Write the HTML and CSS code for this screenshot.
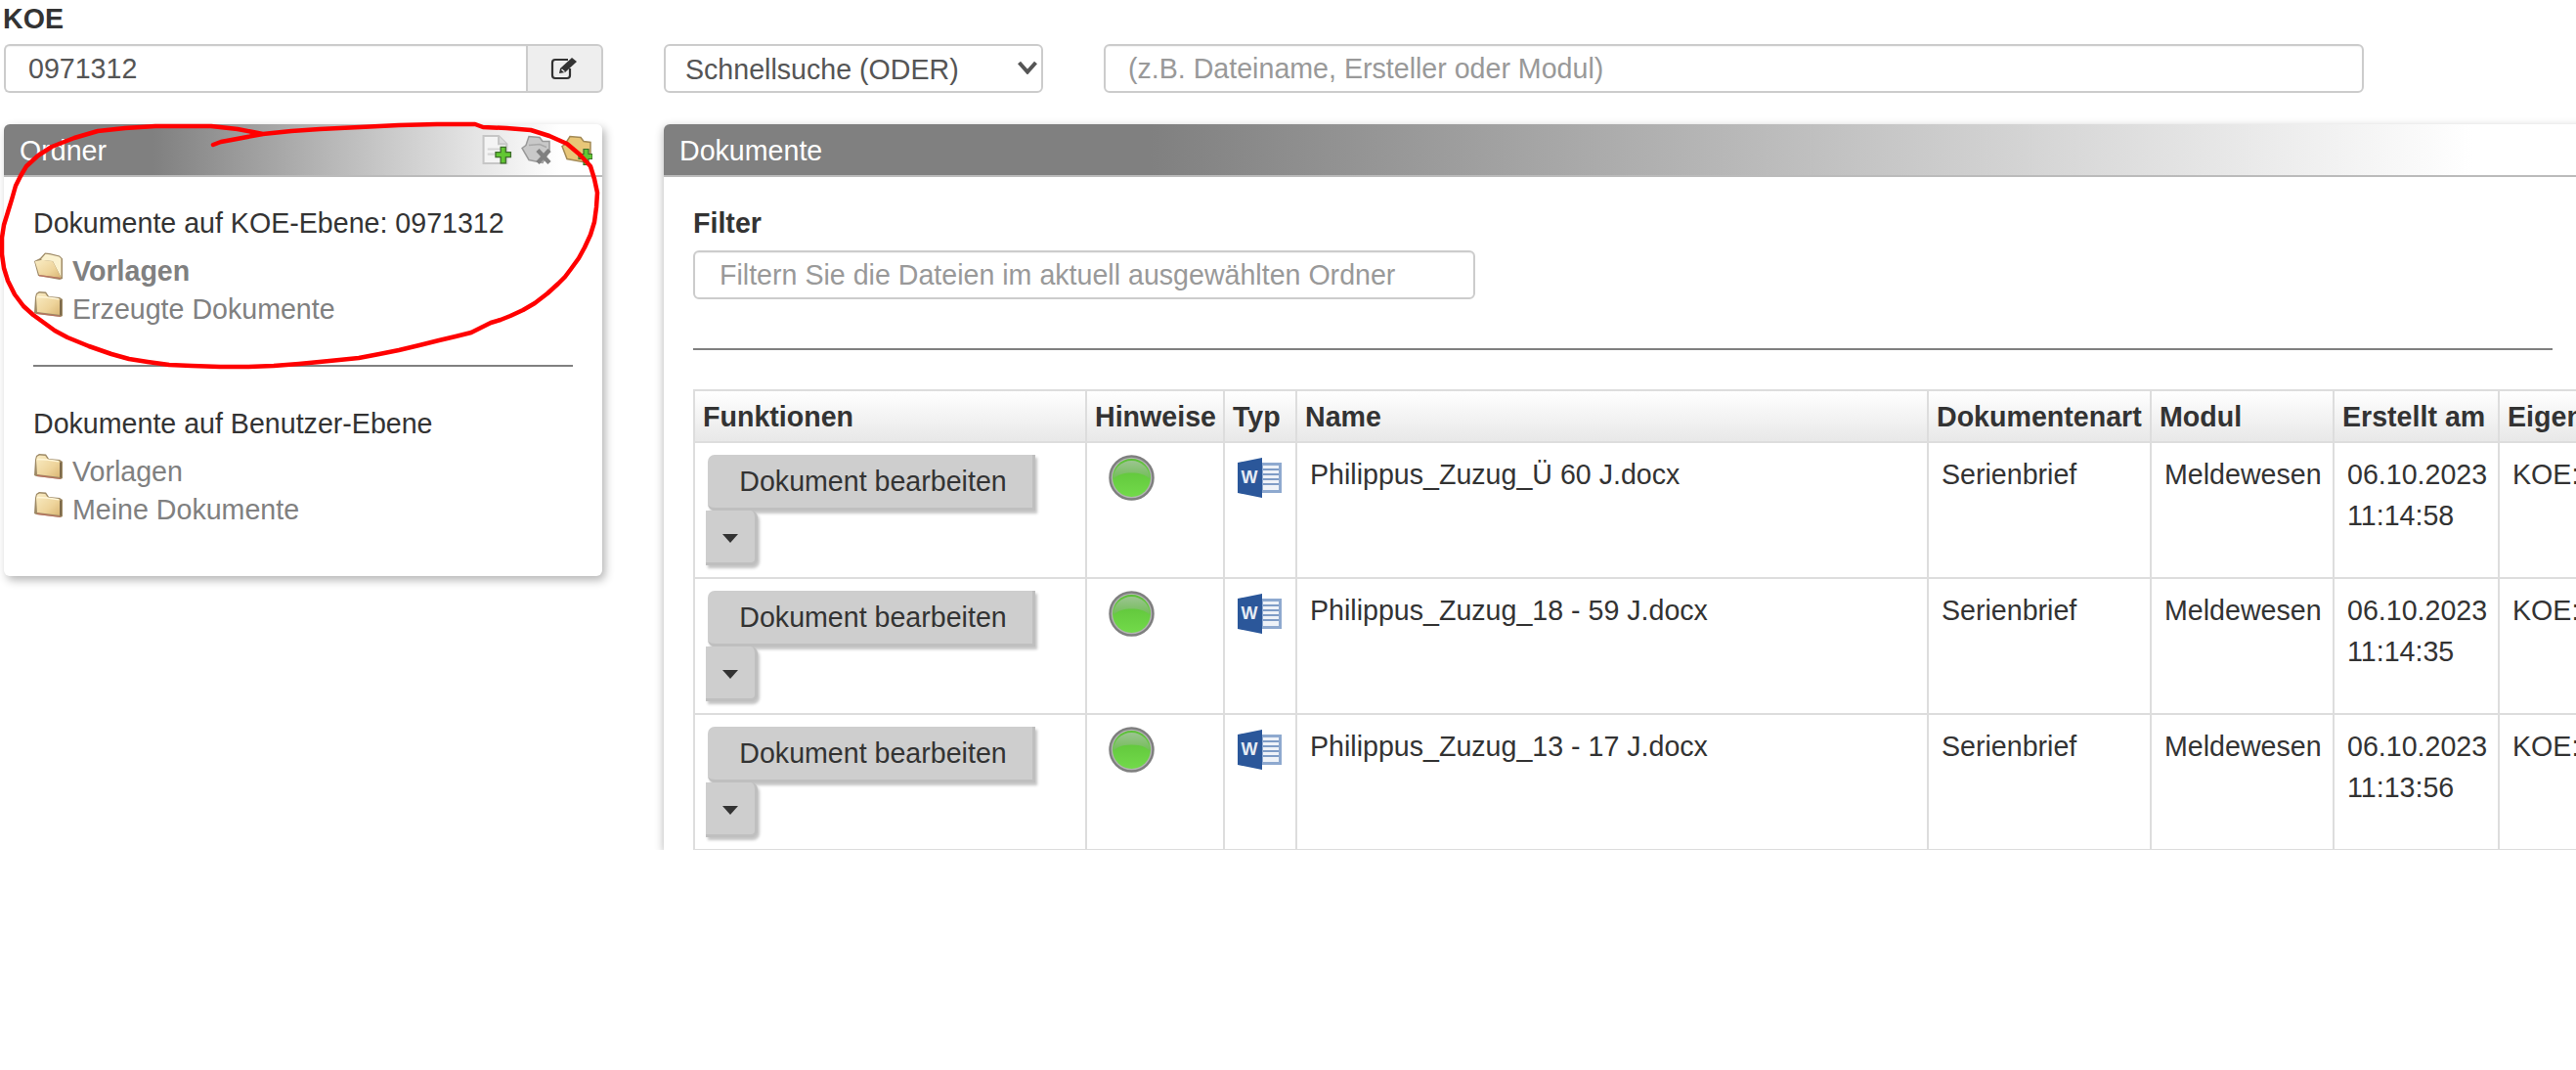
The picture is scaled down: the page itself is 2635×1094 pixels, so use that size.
FILE: index.html
```html
<!DOCTYPE html>
<html lang="de">
<head>
<meta charset="utf-8">
<title>Dokumente</title>
<link rel="stylesheet" href="styles.css">
</head>
<body>
<svg class="defs" width="0" height="0" aria-hidden="true">
  <defs>
    <linearGradient id="fold" x1="0" y1="0" x2="1" y2="1">
      <stop offset="0" stop-color="#f9ecc4"/><stop offset=".6" stop-color="#eed49b"/><stop offset="1" stop-color="#d9b573"/>
    </linearGradient>
    <linearGradient id="led" x1="0" y1="0" x2="0" y2="1">
      <stop offset="0" stop-color="#5bbf36"/><stop offset="1" stop-color="#72da4a"/>
    </linearGradient>
    <linearGradient id="ledtop" x1="0" y1="0" x2="0" y2="1">
      <stop offset="0" stop-color="#9cc491"/><stop offset="1" stop-color="#70bd55"/>
    </linearGradient>
    <symbol id="folder-closed" viewBox="0 0 31 28">
      <path d="M2 7 3 3 6 1l7 .5 3 4.500 11 1 3 2V26l-2 1L3 24l-2-1z" fill="#9e8a66"/>
      <path d="M3 7 4 3.800 6.500 2.500l5.800.4 3 4.300 11.200 1 1.500 1.500V25L4 22z" fill="url(#fold)"/>
      <path d="M4 6.500 14 7l12 1.800" fill="none" stroke="#fff6d8" stroke-width="1.500"/>
      <path d="M27 9.500h2V25.500h-2z" fill="#7d6a4a"/>
      <path d="M4 22.500 28 26v1L4 24z" fill="#c26a5c" opacity=".75"/>
    </symbol>
    <symbol id="folder-open" viewBox="0 0 31 28">
      <path d="M7 6 12 .5l5 .5 10 2.500 3 3V27l-3 1L5 24 1 9z" fill="#9e8a66"/>
      <path d="M8 7 12.500 1.800l4.500.5 9.500 2.300 2 2v19L20 9 9 8z" fill="#fbf2cf"/>
      <path d="M1.800 9.300 9 7.800 20 9.300l8.600 16.700L6 23z" fill="url(#fold)"/>
      <path d="M6 23 28 26v1L6 24.500z" fill="#c26a5c" opacity=".75"/>
    </symbol>
    <symbol id="led-green" viewBox="0 0 47 47">
      <circle cx="23.500" cy="23.500" r="22" fill="#b4b4b4" stroke="#7f7f7f" stroke-width="2.500"/>
      <circle cx="23.500" cy="23.500" r="19.500" fill="url(#led)"/>
      <path d="M4.500 25a19 19 0 0 1 38 0c-5-5-11-6.500-19-6.500S9.500 20 4.500 25z" fill="url(#ledtop)"/>
    </symbol>
    <symbol id="word" viewBox="0 0 45 41">
      <path d="M24 5h21v31H24z" fill="#8ea9cf"/>
      <path d="M26 8h16v25H26z" fill="#eef2f8"/>
      <path d="M26 11h16v2H26zm0 5h16v2H26zm0 5h16v2H26zm0 5h16v2H26z" fill="#7f9cc6"/>
      <path d="M0 5 25 0v41L0 36z" fill="#2b579a"/>
      <text class="word-w" x="12" y="26" text-anchor="middle">W</text>
    </symbol>
  </defs>
</svg>

<div class="page">
  <div class="top">
    <div class="koe">
      <div class="label">KOE</div>
      <div class="group">
        <input class="field group-field" value="0971312">
        <button class="group-btn" aria-label="Bearbeiten">
          <svg class="edit-icon" viewBox="0 0 30 24">
            <path d="M20 12v7a3 3 0 0 1-3 3H5a3 3 0 0 1-3-3V6a3 3 0 0 1 3-3h13" fill="none" stroke="#333" stroke-width="2.200"/>
            <path d="M9 17l1-5L22 1l5 4L15 16z" fill="#333"/>
            <path d="M11.500 13l3 2.500" stroke="#fff" stroke-width="1.200"/>
          </svg>
        </button>
      </div>
    </div>
    <div class="quick">
      <div class="select-wrap">
        <select class="quick-select"><option>Schnellsuche (ODER)</option></select>
        <svg class="chevron" viewBox="0 0 22 14"><path d="M2.500 2 11 11.500 19.500 2" fill="none" stroke="#555" stroke-width="4"/></svg>
      </div>
      <input class="field quick-search" placeholder="(z.B. Dateiname, Ersteller oder Modul)">
    </div>
  </div>

  <div class="main">
    <aside class="panel side">
      <header class="panel-head">
        <span class="head-title">Ordner</span>
        <div class="head-icons">
          <svg class="hicon" viewBox="0 0 30 30">
            <path d="M2 1h15l8 8v19H2z" fill="#f4f4f4" stroke="#c6c6c6" stroke-width="2"/>
            <path d="M17 1v8h8" fill="#ddd" stroke="#c6c6c6" stroke-width="2"/>
            <path d="M6 14h14M6 19h8" stroke="#d6d6d6" stroke-width="2"/>
            <path d="M14 17h5v-5h5v5h5v5h-5v6h-5v-6h-5z" fill="#62c733" stroke="#3d6b2a" stroke-width="1.200"/>
          </svg>
          <svg class="hicon" viewBox="0 0 32 30">
            <path d="M1 13l4-3 3-9 11 1 3 4h7v9L22 28 8 25z" fill="#c9c9c9" stroke="#9a9a9a" stroke-width="1.500"/>
            <path d="M8 10l11-1 7 3" fill="none" stroke="#a8a8a8" stroke-width="1.500"/>
            <path d="M17 15l12 13M29 15 17 28" stroke="#808080" stroke-width="4.500"/>
          </svg>
          <svg class="hicon" viewBox="0 0 32 30">
            <path d="M1 11l3-2 5-8 11 1 3 4 7 1v12l-8 8L6 24z" fill="#e8c678" stroke="#a38a55" stroke-width="1.500"/>
            <path d="M18 19h5v-5h5v5h4v5h-4v6h-5v-6h-5z" fill="#62c733" stroke="#3d6b2a" stroke-width="1.200"/>
          </svg>
        </div>
      </header>
      <div class="side-body">
        <h2 class="tree-title">Dokumente auf KOE-Ebene: 0971312</h2>
        <ul class="tree">
          <li class="tree-item is-active"><svg class="folder"><use href="#folder-open"/></svg>Vorlagen</li>
          <li class="tree-item"><svg class="folder"><use href="#folder-closed"/></svg>Erzeugte Dokumente</li>
        </ul>
        <hr class="rule side-rule">
        <h2 class="tree-title">Dokumente auf Benutzer-Ebene</h2>
        <ul class="tree tree-user">
          <li class="tree-item"><svg class="folder"><use href="#folder-closed"/></svg>Vorlagen</li>
          <li class="tree-item"><svg class="folder"><use href="#folder-closed"/></svg>Meine Dokumente</li>
        </ul>
      </div>
    </aside>

    <section class="panel docs">
      <header class="panel-head"><span class="head-title">Dokumente</span></header>
      <div class="docs-body">
        <label class="filter-label">Filter</label>
        <input class="field filter-field" placeholder="Filtern Sie die Dateien im aktuell ausgewählten Ordner">
        <hr class="rule docs-rule">
        <table class="grid">
          <colgroup>
            <col class="c1"><col class="c2"><col class="c3"><col class="c4"><col class="c5"><col class="c6"><col class="c7"><col class="c8">
          </colgroup>
          <thead>
            <tr><th>Funktionen</th><th>Hinweise</th><th>Typ</th><th>Name</th><th>Dokumentenart</th><th>Modul</th><th>Erstellt am</th><th>Eigentümer</th></tr>
          </thead>
          <tbody>
            <tr>
              <td class="fn"><button class="act">Dokument bearbeiten</button><button class="caret-btn" aria-label="Mehr"><i class="caret"></i></button></td>
              <td class="status"><svg class="led"><use href="#led-green"/></svg></td>
              <td class="type"><svg class="word"><use href="#word"/></svg></td>
              <td>Philippus_Zuzug_Ü 60 J.docx</td><td>Serienbrief</td><td>Meldewesen</td><td>06.10.2023<br>11:14:58</td><td>KOE: 0971312</td>
            </tr>
            <tr>
              <td class="fn"><button class="act">Dokument bearbeiten</button><button class="caret-btn" aria-label="Mehr"><i class="caret"></i></button></td>
              <td class="status"><svg class="led"><use href="#led-green"/></svg></td>
              <td class="type"><svg class="word"><use href="#word"/></svg></td>
              <td>Philippus_Zuzug_18 - 59 J.docx</td><td>Serienbrief</td><td>Meldewesen</td><td>06.10.2023<br>11:14:35</td><td>KOE: 0971312</td>
            </tr>
            <tr>
              <td class="fn"><button class="act">Dokument bearbeiten</button><button class="caret-btn" aria-label="Mehr"><i class="caret"></i></button></td>
              <td class="status"><svg class="led"><use href="#led-green"/></svg></td>
              <td class="type"><svg class="word"><use href="#word"/></svg></td>
              <td>Philippus_Zuzug_13 - 17 J.docx</td><td>Serienbrief</td><td>Meldewesen</td><td>06.10.2023<br>11:13:56</td><td>KOE: 0971312</td>
            </tr>
          </tbody>
        </table>
      </div>
    </section>
  </div>

  <svg class="scribble" viewBox="0 0 2635 869" aria-hidden="true">
    <polyline class="scribble-path" points="269,137 243,132 216,129 187,129 159,129 128,131 100,134 76,141 53,150 39,159 27,170 21,180 16,190 12,204 8,217 4,230 2,243 2,260 4,274 8,287 15,301 24,313 34,322 45,330 56,338 69,345 91,354 114,362 132,367 151,370 173,373 196,374 225,375 253,375 280,374 306,372 337,369 367,366 388,362 408,358 429,353 449,348 466,344 482,340 492,335 502,330 512,327 522,323 535,317 547,310 560,300 571,290 578,283 584,275 592,264 598,253 604,240 608,227 610,212 611,197 608,183 604,170 593,158 580,147 562,139 543,133 518,131 494,130 486,127 447,127 408,128 368,130 327,132 298,134 269,137 253,140 237,143 226,145 218,148"/>
  </svg>
</div>
</body>
</html>
```

FILE: styles.css
```css
* { box-sizing: border-box; }
html, body { margin: 0; background: #fff; }
body {
  font-family: "Liberation Sans", Arial, sans-serif;
  font-size: 28.6px;
  line-height: 42px;
  color: #333;
  overflow: hidden;
}
.defs { position: absolute; }
.page {
  position: relative;
  width: 2635px;
  height: 869px;
  overflow: hidden;
  padding-left: 4px;
}

.top { display: flex; height: 127px; }
.koe { width: 613px; flex: none; }
.label { font-weight: 700; height: 45px; line-height: 38px; margin-left: -1px; }
.field {
  display: block;
  height: 50px;
  font: 28.6px "Liberation Sans", Arial, sans-serif;
  color: #555;
  background: #fff;
  border: 2px solid #ccc;
  border-radius: 6px;
  padding: 0 23px;
  box-shadow: inset 0 1px 1px rgba(0,0,0,.05);
  outline: none;
}
.field::placeholder { color: #999; opacity: 1; }
.group { display: flex; }
.group-field { flex: 1; min-width: 0; border-right: 0; border-radius: 6px 0 0 6px; }
.group-btn {
  width: 79px;
  height: 50px;
  padding: 0;
  background: #eee;
  border: 2px solid #ccc;
  border-radius: 0 6px 6px 0;
  display: flex;
  align-items: center;
  justify-content: center;
}
.edit-icon { width: 30px; height: 24px; }
.quick { display: flex; margin-top: 45px; margin-left: 62px; gap: 62px; align-items: flex-start; }
.select-wrap { position: relative; width: 388px; height: 50px; }
.quick-select {
  display: block;
  width: 100%;
  height: 50px;
  appearance: none;
  -webkit-appearance: none;
  font: 28.6px "Liberation Sans", Arial, sans-serif;
  color: #555;
  background: #fff;
  border: 2px solid #ccc;
  border-radius: 6px;
  padding: 2px 20px 0;
}
.chevron { position: absolute; right: 5px; top: 17px; width: 22px; height: 14px; pointer-events: none; }
.quick-search { width: 1289px; }

.main { display: flex; align-items: flex-start; gap: 63px; }
.panel {
  flex: none;
  background: #fff;
  border-radius: 6px 6px 0 0;
}
.panel-head {
  height: 54px;
  display: flex;
  align-items: center;
  justify-content: space-between;
  color: #fff;
  background: linear-gradient(to right, #808080 25%, #fff 93%);
  border-bottom: 2px solid #bbb;
  border-radius: 6px 6px 0 0;
  padding-left: 16px;
}
.head-title { padding-top: 2px; }
.side { width: 612px; border-radius: 6px; box-shadow: 3px 4px 10px rgba(0,0,0,.3); }
.head-icons { display: flex; gap: 9px; padding-right: 10px; }
.hicon { width: 32px; height: 31px; }
.side-body { padding: 26px 30px 48px; }
.tree-title { margin: 0; font: inherit; height: 42px; }
.tree { list-style: none; margin: 9px 0 0; padding: 0; color: #808080; }
.tree-item { height: 39px; line-height: 39px; display: flex; align-items: flex-start; }
.tree-item.is-active { font-weight: 700; }
.folder { width: 31px; height: 28px; margin-right: 9px; flex: none; }
.rule { border: 0; height: 2px; background: #808080; margin: 0; }
.side-rule { margin: 37px 0 37px; width: 552px; }
.tree-user { margin-top: 9px; }

.docs { width: 1990px; height: 742px; box-shadow: 0 3px 10px rgba(0,0,0,.3); }
.docs-body { padding: 23px 0 0 30px; }
.filter-label { display: block; font-weight: 700; height: 52px; line-height: 48px; }
.filter-field { width: 800px; padding: 0 25px; }
.docs-rule { width: 1902px; margin: 50px 0 40px; }

.grid {
  table-layout: fixed;
  border-collapse: collapse;
  width: 1960px;
}
.c1 { width: 401px; } .c2 { width: 141px; } .c3 { width: 74px; } .c4 { width: 646px; }
.c5 { width: 228px; } .c6 { width: 187px; } .c7 { width: 169px; } .c8 { width: 114px; }
.grid th, .grid td { border: 2px solid #ddd; overflow: hidden; white-space: nowrap; }
.grid th {
  height: 53px;
  padding: 0 0 0 8px;
  text-align: left;
  font-weight: 700;
  background: linear-gradient(to bottom, #fff, #e8e8e8);
}
.grid td { height: 139px; vertical-align: top; padding: 11px 0 0 13px; }
.grid td.fn { padding: 12px 0 0 11px; white-space: normal; }
.act {
  display: block;
  width: 335px;
  height: 57px;
  margin-left: 2px;
  padding: 0 0 0 6px;
  font: 28.6px "Liberation Sans", Arial, sans-serif;
  color: #333;
  background: #cecece;
  border: 0;
  border-right: 3px solid #bfbfbf;
  border-bottom: 3px solid #bfbfbf;
  border-radius: 7px 0 0 7px;
  box-shadow: 2px 3px 3px #c4c4c4;
}
.caret-btn {
  display: flex;
  align-items: flex-end;
  justify-content: center;
  width: 53px;
  height: 56px;
  padding: 0 0 20px;
  background: #cecece;
  border: 0;
  border-right: 3px solid #bfbfbf;
  border-bottom: 3px solid #bfbfbf;
  border-radius: 0 7px 7px 0;
  box-shadow: 2px 3px 3px #c4c4c4;
}
.caret { display: block; width: 0; height: 0; border: 8px solid transparent; border-top: 9px solid #333; border-bottom: 0; }
.grid td.status { padding: 12px 0 0 22px; }
.grid td.type { padding: 15px 0 0 13px; }
.led { display: block; width: 47px; height: 47px; }
.word { display: block; width: 45px; height: 41px; }
.word-w { font: 700 18px "Liberation Sans", Arial, sans-serif; fill: #e6ecf5; }

.scribble { position: absolute; left: 0; top: 0; width: 2635px; height: 869px; pointer-events: none; }
.scribble-path { fill: none; stroke: #f00; stroke-width: 4.5; stroke-linecap: round; stroke-linejoin: round; }
```
